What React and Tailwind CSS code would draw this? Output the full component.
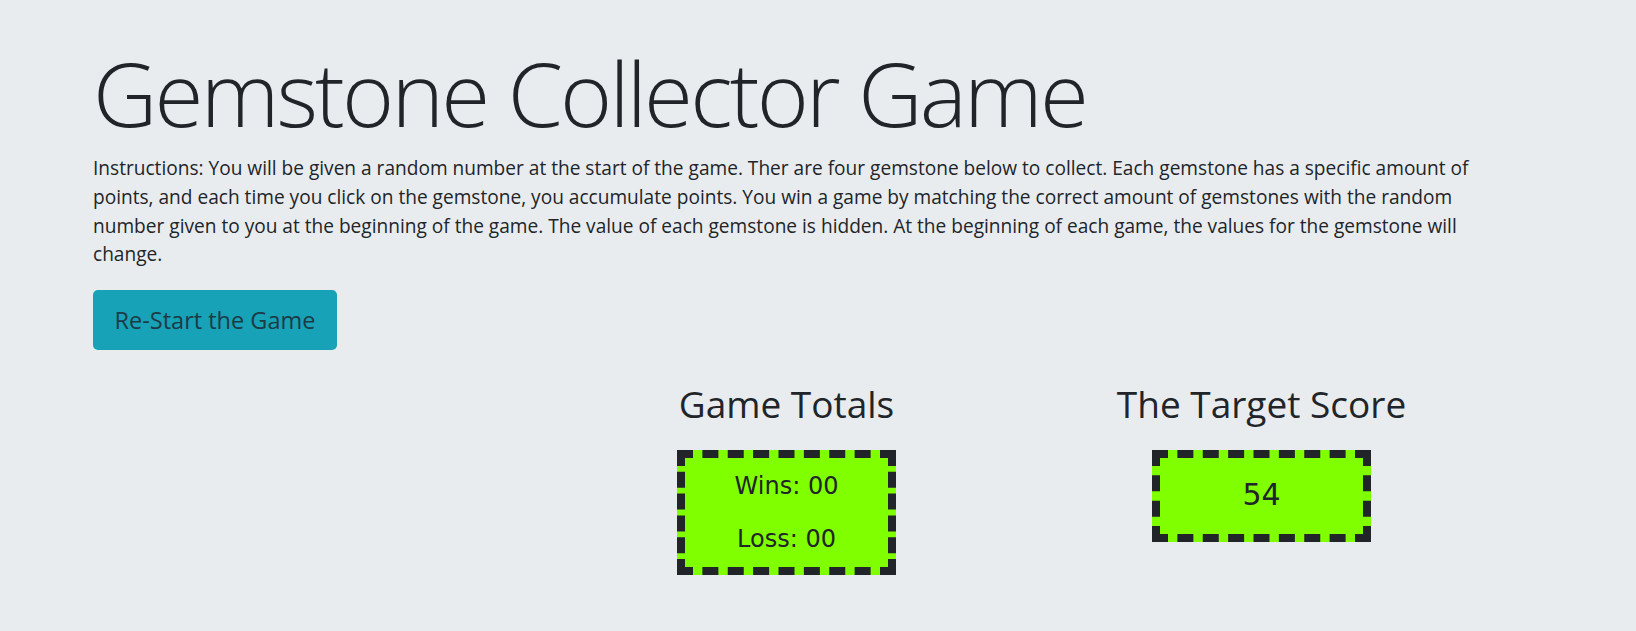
export default function App() {
    return (
        <div className="min-h-[631px] bg-[#e9ecef] text-[#212529] px-[74px] pt-[38px] font-['Open_Sans','Noto_Sans',sans-serif]">
            {/* Header */}
            <div className="px-[19px]">
                <h1 className="text-[89px] font-light leading-[110px] tracking-[-2.8px]">
                    Gemstone Collector Game
                </h1>
                <p className="mt-[6px] text-[19.1px] leading-[28.8px] max-w-[1389px]">
                    Instructions: You will be given a random number at the start of the game. Ther are four
                    gemstone below to collect. Each gemstone has a specific amount of points, and each time you
                    click on the gemstone, you accumulate points. You win a game by matching the correct amount
                    of gemstones with the random number given to you at the beginning of the game. The value of
                    each gemstone is hidden. At the beginning of each game, the values for the gemstone will
                    change.
                </p>
                <button className="mt-[21px] w-[244px] h-[60px] rounded-[5px] bg-[#17a2b8] text-[23.5px] text-[#1d3b45]">
                    Re-Start the Game
                </button>
            </div>

            {/* Score row */}
            <div className="mt-[31px] grid grid-cols-[475px_475px_475px]">
                <div />
                <div className="flex flex-col items-center">
                    <h2 className="text-[37px] leading-[46px]">Game Totals</h2>
                    <div className="mt-[23px] w-[219px] border-[8px] border-dashed border-[#212529] bg-[#7fff00] pt-[2px] pb-[1px] text-center text-[24px] leading-[53px] font-['DejaVu_Sans',sans-serif]">
                        <p>Wins: 00</p>
                        <p>Loss: 00</p>
                    </div>
                </div>
                <div className="flex flex-col items-center">
                    <h2 className="text-[37px] leading-[46px]">The Target Score</h2>
                    <div className="mt-[23px] w-[219px] border-[8px] border-dashed border-[#212529] bg-[#7fff00] pt-[17px] pb-[19px] text-center text-[30px] leading-[40px] font-['DejaVu_Sans',sans-serif]">
                        54
                    </div>
                </div>
            </div>
        </div>
    );
}
